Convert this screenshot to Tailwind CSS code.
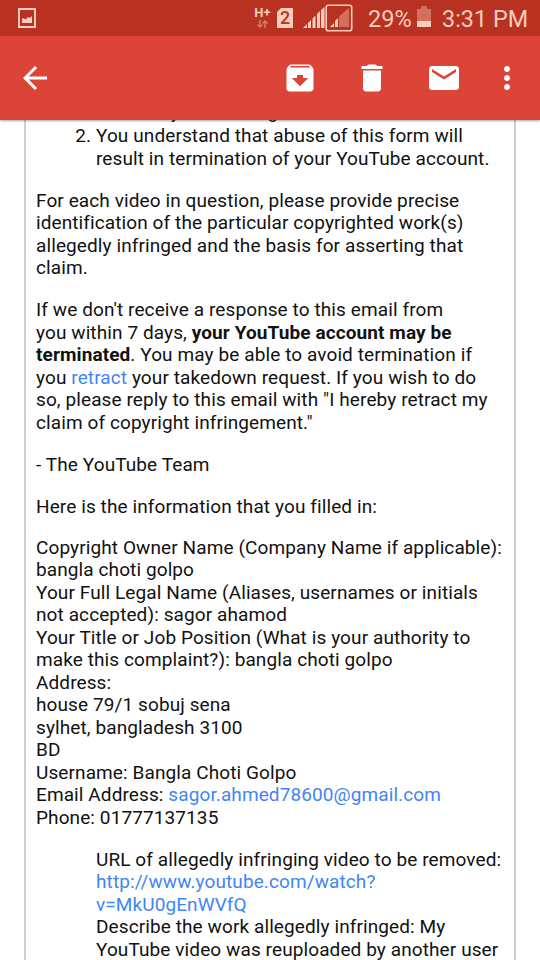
<!DOCTYPE html>
<html lang="en">
<head>
    <meta charset="UTF-8">
    <meta name="viewport" content="width=device-width, initial-scale=1.0">
    <title>Mail</title>
    <script src="https://cdn.jsdelivr.net/npm/@tailwindcss/browser@4"></script>
</head>
<body class="bg-white font-['Roboto',sans-serif]">
    <div class="w-[540px] h-[960px] flex flex-col overflow-hidden">

        <!-- Status bar -->
        <div class="h-9 shrink-0 flex items-center bg-[#b93221] text-[#f8cdbd]">
            <svg class="ml-[18px] w-[18px] h-5" viewBox="0 0 18 20" fill="none">
                <rect x="1" y="1" width="16" height="18" stroke="currentColor" stroke-width="2"/>
                <path d="M4 15v-4l1.500-1 2 1.500L10 9l1.500 1L14 8v7z" fill="currentColor"/>
            </svg>
            <div class="ml-[218px] w-[17px] h-7 flex flex-col items-center pt-[2px]">
                <span class="text-[13px] leading-[13px] font-bold">H+</span>
                <svg class="w-[11px] h-[8px] mt-px opacity-45" viewBox="0 0 11 8" fill="none" stroke="currentColor" stroke-width="1.6">
                    <path d="M3 0v7M.5 4.5L3 7l2.500-2.500M8 8V1M5.500 3.500L8 1l2.500 2.500"/>
                </svg>
            </div>
            <div class="ml-[6px] w-[16px] h-5 bg-[#f8cdbd] text-[#b93221] text-[18px] leading-5 font-medium text-center [clip-path:polygon(25%_0,100%_0,100%_100%,0_100%,0_20%)]">2</div>
            <svg class="ml-[10px] w-[50px] h-7" viewBox="0 0 50 28" fill="currentColor">
                <path d="M0 24l4-4v4zM5 24v-5l3-3v8zM9.500 24V14.500l3-3V24zM14 24V10l3-3v17zM18 24V6l3.500-3v21z"/>
                <rect x="23.200" y="1.200" width="25.500" height="25.500" rx="2" fill="none" stroke="currentColor" stroke-width="1.600"/>
                <path d="M27 23l4-4v4zM32 23v-6l3-3v9z"/>
                <path d="M36 23V12.500L46 4v19z" opacity=".4"/>
            </svg>
            <span class="ml-[15px] w-[43px] text-[23.500px] leading-[38px] pt-px whitespace-nowrap">29%</span>
            <svg class="ml-[6px] w-[14px] h-[21px] -mt-[3px]" viewBox="0 0 14 21" fill="currentColor">
                <path d="M0 3h4V0h6v3h4v12H0z" opacity=".4"/>
                <path d="M0 15h14v6H0z"/>
            </svg>
            <span class="ml-[11px] text-[23.400px] leading-[38px] pt-px whitespace-nowrap">3:31 PM</span>
        </div>

        <!-- Toolbar -->
        <div class="relative z-10 h-[84px] shrink-0 flex items-center bg-[#dc4437] text-white shadow-[0_1px_2px_rgba(0,0,0,0.35)]">
            <svg class="ml-[17px] size-9 -mt-px" viewBox="0 0 24 24" fill="currentColor"><path d="M20 11H7.830l5.590-5.590L12 4l-8 8 8 8 1.410-1.410L7.830 13H20v-2z"/></svg>
            <svg class="ml-[229px] size-9" viewBox="0 0 24 24" fill="currentColor"><path d="M20.540 5.230l-1.390-1.680C18.880 3.210 18.470 3 18 3H6c-.470 0-.880.210-1.160.550L3.460 5.230C3.170 5.570 3 6.020 3 6.500V19c0 1.100.900 2 2 2h14c1.100 0 2-.900 2-2V6.500c0-.480-.170-.930-.460-1.270zM12 17.500L6.500 12H10v-2h4v2h3.500L12 17.500zM5.120 5l.810-1h12l.940 1H5.120z"/></svg>
            <svg class="ml-9 size-9" viewBox="0 0 24 24" fill="currentColor"><path d="M6 19c0 1.100.900 2 2 2h8c1.100 0 2-.900 2-2V7H6v12zM19 4h-3.500l-1-1h-5l-1 1H5v2h14V4z"/></svg>
            <svg class="ml-9 size-9" viewBox="0 0 24 24" fill="currentColor"><path d="M20 4H4c-1.100 0-1.990.900-1.990 2L2 18c0 1.100.900 2 2 2h16c1.100 0 2-.900 2-2V6c0-1.100-.900-2-2-2zm0 4l-8 5-8-5V6l8 5 8-5v2z"/></svg>
            <svg class="ml-[27px] size-9" viewBox="0 0 24 24" fill="currentColor"><path d="M12 8c1.100 0 2-.900 2-2s-.900-2-2-2-2 .900-2 2 .900 2 2 2zm0 2c-1.100 0-2 .900-2 2s.900 2 2 2 2-.900 2-2-.900-2-2-2zm0 6c-1.100 0-2 .900-2 2s.900 2 2 2 2-.900 2-2-.900-2-2-2z"/></svg>
        </div>

        <!-- Message body, scrolled part way down -->
        <div class="mx-6 flex-1 min-h-0 overflow-hidden border-x-2 border-[#d0d0d0] pl-[10px] text-[19px] tracking-[0.100px] leading-[22.500px] text-[#111] whitespace-nowrap">
            <div class="-mt-[19px] space-y-[19.500px]">
                <ol class="list-decimal pl-[60px]" start="1">
                    <li class="list-none mb-[1.500px]">materially misleading</li>
                    <li>You understand that abuse of this form will<br>result in termination of your YouTube account.</li>
                </ol>
                <p>For each video in question, please provide precise<br>identification of the particular copyrighted work(s)<br>allegedly infringed and the basis for asserting that<br>claim.</p>
                <p>If we don't receive a response to this email from<br>you within 7 days, <b>your YouTube account may be<br>terminated</b>. You may be able to avoid termination if<br>you <a class="text-[#4285f4]">retract</a> your takedown request. If you wish to do<br>so, please reply to this email with "I hereby retract my<br>claim of copyright infringement."</p>
                <p>- The YouTube Team</p>
                <p>Here is the information that you filled in:</p>
                <p class="-mt-[1px]">Copyright Owner Name (Company Name if applicable):<br>bangla choti golpo<br>Your Full Legal Name (Aliases, usernames or initials<br>not accepted): sagor ahamod<br>Your Title or Job Position (What is your authority to<br>make this complaint?): bangla choti golpo<br>Address:<br>house 79/1 sobuj sena<br>sylhet, bangladesh 3100<br>BD<br>Username: Bangla Choti Golpo<br>Email Address: <a class="text-[#4285f4]">sagor.ahmed78600@gmail.com</a><br>Phone: 01777137135</p>
                <p class="pl-[60px]">URL of allegedly infringing video to be removed:<br><a class="text-[#4285f4]">http://www.youtube.com/watch?<br>v=MkU0gEnWVfQ</a><br>Describe the work allegedly infringed: My<br>YouTube video was reuploaded by another user</p>
            </div>
        </div>
    </div>
</body>
</html>
